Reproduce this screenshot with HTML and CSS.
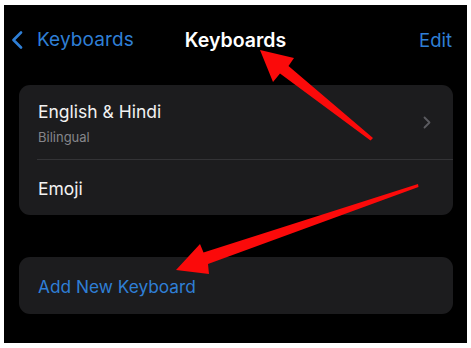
FILE: index.html
```html
<!DOCTYPE html>
<html>
<head>
<meta charset="utf-8">
<link rel="stylesheet" href="styles.css">
</head>
<body>
<div class="screen">
  <header class="nav">
    <div class="nav-left">
      <svg class="back-chev" width="12" height="18" viewBox="0 0 12 18"><path d="M10 1.5 L2.5 9 L10 16.5" fill="none" stroke="#2f7fd6" stroke-width="2.6" stroke-linecap="round" stroke-linejoin="round"/></svg>
      <span class="back-label">Keyboards</span>
    </div>
    <div class="nav-title">Keyboards</div>
    <div class="nav-right">Edit</div>
  </header>
  <section class="group">
    <div class="row row-tall">
      <div class="row-text">
        <div class="row-title">English &amp; Hindi</div>
        <div class="row-sub">Bilingual</div>
      </div>
      <svg class="chev" width="8" height="13" viewBox="0 0 8 13"><path d="M1.5 1.5 L6.5 6.5 L1.5 11.5" fill="none" stroke="#5b5b60" stroke-width="1.8" stroke-linecap="round" stroke-linejoin="round"/></svg>
    </div>
    <div class="sep"></div>
    <div class="row row-short">
      <div class="row-title">Emoji</div>
    </div>
  </section>
  <section class="group group-add">
    <div class="row row-add">
      <div class="row-link">Add New Keyboard</div>
    </div>
  </section>
</div>
<svg class="arrows" width="471" height="348" viewBox="0 0 471 348">
  <polygon points="260,50 294,58 288.5,66 373,138 370.5,140.5 280,73.5 273,82" fill="#fb0a0a"/>
  <polygon points="176,270 200,244 203.5,252.5 418,184 418.5,187 208,264 209,274" fill="#fb0a0a"/>
</svg>
</body>
</html>
```
FILE: styles.css
```css
html, body {
  margin: 0;
  padding: 0;
  background: #ffffff;
}
body {
  position: relative;
  width: 471px;
  height: 348px;
  overflow: hidden;
  font-family: Inter, "Noto Sans", sans-serif;
  -webkit-font-smoothing: antialiased;
}
.screen {
  margin: 5px 4px;
  height: 338px;
  background: #000000;
  box-sizing: border-box;
  padding: 0 14px 0 15px;
}
.nav {
  display: grid;
  grid-template-columns: 1fr auto 1fr;
  align-items: center;
  height: 70px;
  margin: 0 -14px 10px -15px;
}
.nav-left {
  display: flex;
  align-items: center;
  padding-left: 7px;
  color: #2f7fd6;
}
.back-chev {
  display: block;
  margin-right: 14px;
}
.back-label {
  font-size: 19px;
  line-height: 22px;
  letter-spacing: 0.1px;
}
.nav-title {
  color: #ffffff;
  font-size: 19.5px;
  font-weight: 600;
  line-height: 22px;
  text-align: center;
}
.nav-right {
  justify-self: end;
  padding-right: 15px;
  color: #2f7fd6;
  font-size: 18.5px;
  line-height: 22px;
}
.group {
  background: #1c1c1e;
  border-radius: 11px;
  overflow: hidden;
}
.group-add {
  margin-top: 42px;
}
.row {
  display: flex;
  align-items: center;
  padding: 0 22px 0 19px;
}
.row-tall {
  height: 74px;
  justify-content: space-between;
}
.row-text {
  display: flex;
  flex-direction: column;
  gap: 6px;
  margin-top: 2px;
}
.row-title {
  color: #f2f2f2;
  font-size: 17.5px;
  line-height: 22px;
}
.row-sub {
  color: #86868b;
  font-size: 13px;
  line-height: 17px;
}
.chev {
  display: block;
}
.sep {
  height: 1px;
  margin-left: 18px;
  background: #333336;
}
.row-short {
  height: 55px;
  padding-top: 2px;
  box-sizing: border-box;
}
.row-add {
  height: 57px;
  padding-top: 2px;
  box-sizing: border-box;
}
.row-link {
  color: #2f7fd6;
  font-size: 17.3px;
  line-height: 22px;
}
.arrows {
  position: absolute;
  top: 0;
  left: 0;
  pointer-events: none;
}
```
